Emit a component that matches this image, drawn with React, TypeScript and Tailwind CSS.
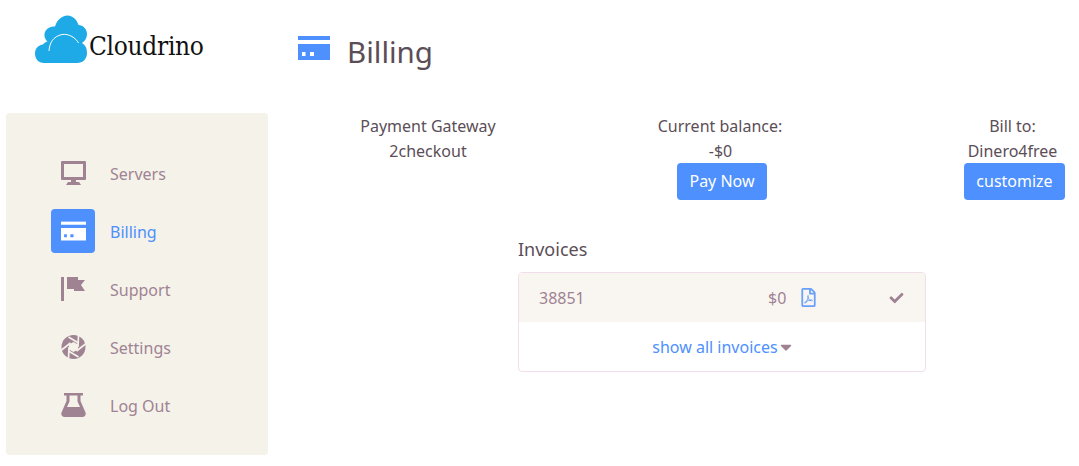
import { FaCheck, FaRegFilePdf, FaCaretDown } from 'react-icons/fa';

const muted = '#9f8393';

function CardIcon({ className }: { className: string }) {
  return (
    <svg viewBox="0 0 32 24" className={className} fill="currentColor">
      <path d="M0 0h32v4H0z" />
      <path fillRule="evenodd" d="M0 8h32v16H0z M4 16v4h3.500v-4z M12 16v4h4v-4z" />
    </svg>
  );
}

function MonitorIcon() {
  return (
    <svg viewBox="0 0 25 24" className="h-6 w-[25px]" fill={muted}>
      <path fillRule="evenodd" d="M1 0h23a1 1 0 0 1 1 1v17a1 1 0 0 1-1 1H1a1 1 0 0 1-1-1V1a1 1 0 0 1 1-1z M3 3v13h19V3z" />
      <path d="M10 19h5v2h3l2 3H5l2-3h3z" />
    </svg>
  );
}

function FlagIcon() {
  return (
    <svg viewBox="0 0 25 24" className="h-6 w-[25px]" fill={muted}>
      <path d="M0 0h3v24H0z" />
      <path d="M6 0h11v3h7l-4 5 4 6H13v-2H6z" />
    </svg>
  );
}

function ApertureIcon() {
  const bg = '#f5f2ea';
  return (
    <svg viewBox="0 0 24 24" className="h-6 w-[25px]">
      <circle cx="12" cy="12" r="12" fill={muted} />
      <g stroke={bg} strokeWidth="1.700">
        <path d="M7 2 17 8" />
        <path d="M17 0 16.500 12" />
        <path d="M24 9 15 16" />
        <path d="M17 22 7 16" />
        <path d="M7 24 7.500 12" />
        <path d="M0 15 9 8" />
      </g>
      <path d="M12 7 16.500 9.500V14.500L12 17 7.500 14.500V9.500z" fill={bg} />
    </svg>
  );
}

function FlaskIcon() {
  return (
    <svg viewBox="0 0 25 24" className="h-6 w-[25px]" fill={muted}>
      <path fillRule="evenodd" d="M3 0h19v2.500h-2.500v5.500l5 11.500c.8 2.200-.5 4.500-3 4.500H3.500C1 24-.3 21.700.5 19.500l5-11.500V2.500H3z M8.500 2.500v6L6 14h13l-2.500-5.500v-6z" />
    </svg>
  );
}

function Logo() {
  return (
    <svg viewBox="0 0 53 49" className="h-[49px] w-[53px] shrink-0">
      <path
        fill="#1eaae7"
        d="M9 48C3.500 48 0 44 0 38.500 0 33.500 3.500 30 8 29.500 9 28 10.500 27 12.500 26.500 9.500 24 8.500 19.500 10.500 16 12.500 12.500 16.500 11 20 11.500 22 5 26.500 1 32.500.5 38.500 1 42 5 43.500 10 48 10 52 14 52 19 52 23 50 26 47 28 50.500 30 52 33.500 52 38 52 44 48 48 42 48z"
      />
      <path fill="none" stroke="#fff" strokeWidth="1" d="M14 36C14.500 28 18 21.500 27 19.500 34 18.500 41 23 43.500 28" />
    </svg>
  );
}

function NavItem({ label, icon, active }: { label: string; icon: React.ReactNode; active?: boolean }) {
  return (
    <div className="flex h-[44px] items-center">
      <div className={`flex h-[44px] w-[44px] items-center justify-center rounded-[4px] ${active ? 'bg-[#4d90fe] text-white' : ''}`}>
        {icon}
      </div>
      <span className={`ml-[15px] mt-[2px] text-[16px] ${active ? 'text-[#4d90fe]' : 'text-[#9f8393]'}`}>{label}</span>
    </div>
  );
}

export default function App() {
  return (
    <div className="flex h-[466px] w-[1079px] overflow-hidden bg-white font-['Noto_Sans',sans-serif] text-[#5b4e57]">
      {/* left column */}
      <div className="ml-[6px] w-[262px] shrink-0">
        <div className="flex h-[113px] items-start pl-[29px] pt-[15px]">
          <Logo />
          <span className="ml-[1px] mt-[14px] font-['DejaVu_Serif',serif] font-stretch-condensed text-[26px] leading-[34px] tracking-[-0.3px] text-[#111]">
            Cloudrino
          </span>
        </div>
        <div className="flex h-[342px] flex-col gap-[14px] rounded-[4px] bg-[#f5f2ea] pl-[45px] pt-[38px]">
          <NavItem label="Servers" icon={<MonitorIcon />} />
          <NavItem label="Billing" active icon={<CardIcon className="h-6 w-[25px]" />} />
          <NavItem label="Support" icon={<FlagIcon />} />
          <NavItem label="Settings" icon={<ApertureIcon />} />
          <NavItem label="Log Out" icon={<FlaskIcon />} />
        </div>
      </div>

      {/* main */}
      <div className="min-w-0 flex-1">
        <div className="flex h-[113px] items-start pl-[30px] pt-[36px]">
          <CardIcon className="h-6 w-8 text-[#4d90fe]" />
          <h1 className="ml-[17px] mt-[-6px] text-[29.500px] leading-[44px]">Billing</h1>
        </div>

        <div className="flex items-start pt-[1px] text-center text-[16px] leading-[25px]">
          <div className="ml-[60px] w-[200px]">
            <div>Payment Gateway</div>
            <div>2checkout</div>
          </div>
          <div className="ml-[94px] flex w-[200px] flex-col items-center">
            <div className="pr-[4px]">Current balance:</div>
            <div className="pr-[3px]">-$0</div>
            <button className="mt-[-1px] h-[37px] w-[90px] rounded-[4px] bg-[#4d90fe] text-[16px] text-white">Pay Now</button>
          </div>
          <div className="ml-[142px] flex w-[101px] flex-col items-center">
            <div className="pr-[4px]">Bill to:</div>
            <div className="pr-[4px]">Dinero4free</div>
            <button className="mt-[-1px] h-[37px] w-[101px] rounded-[4px] bg-[#4d90fe] text-[16px] text-white">customize</button>
          </div>
        </div>

        <div className="ml-[250px] mt-[37px] w-[408px]">
          <h2 className="text-[18px] leading-[25px]">Invoices</h2>
          <div className="mt-[10px] overflow-hidden rounded-[4px] border border-[#f0dfea]">
            <div className="flex h-[49px] items-center bg-[#f9f6f2] pl-5 text-[16px] text-[#9f8393]">
              <span className="w-[229px]">38851</span>
              <span className="w-[32px]">$0</span>
              <FaRegFilePdf className="h-[19px] w-[17px] text-[#6a9ffa]" />
              <FaCheck className="ml-[72px] h-[14px] w-[15px] text-[#9f8393]" />
            </div>
            <div className="flex h-[49px] items-center justify-center text-[16px] text-[#4d90fe]">
              show all invoices
              <FaCaretDown className="ml-[2px] h-[18px] w-[12px] text-[#9f8393]" />
            </div>
          </div>
        </div>
      </div>
    </div>
  );
}
